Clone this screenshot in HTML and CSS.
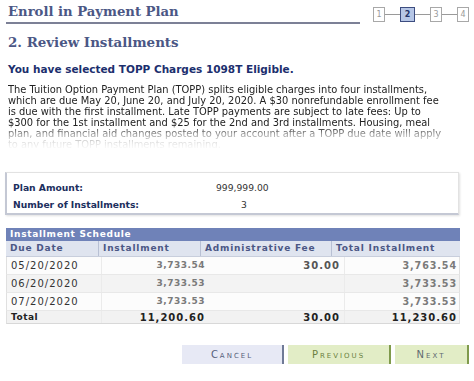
FILE: index.html
```html
<!DOCTYPE html>
<html lang="en">
  <head>
    <meta charset="UTF-8" />
    <meta name="viewport" content="width=device-width, initial-scale=1.0" />
    <title>Enroll in Payment Plan</title>
    <link rel="stylesheet" href="styles.css">
  </head>
  <body>
    <div class="page">
      <!-- Page title and step train -->
      <div class="title-bar">
        <h1 class="page-title">Enroll in Payment Plan</h1>
        <div class="steps">
          <span class="step">1</span>
          <span class="step-line"></span>
          <span class="step current">2</span>
          <span class="step-line"></span>
          <span class="step">3</span>
          <span class="step-line"></span>
          <span class="step">4</span>
        </div>
      </div>

      <h2 class="step-title">2. Review Installments</h2>

      <p class="selected">You have selected TOPP Charges 1098T Eligible.</p>

      <div class="intro">
        The Tuition Option Payment Plan (TOPP) splits eligible charges into four installments,<br>
        which are due May 20, June 20, and July 20, 2020. A $30 nonrefundable enrollment fee<br>
        is due with the first installment. Late TOPP payments are subject to late fees: Up to<br>
        $300 for the 1st installment and $25 for the 2nd and 3rd installments. Housing, meal<br>
        plan, and financial aid changes posted to your account after a TOPP due date will apply<br>
        to any future TOPP installments remaining.
      </div>

      <!-- Plan summary -->
      <div class="summary">
        <div class="summary-row">
          <span class="summary-label">Plan Amount:</span>
          <span class="summary-value">999,999.00</span>
        </div>
        <div class="summary-row">
          <span class="summary-label">Number of Installments:</span>
          <span class="summary-value count">3</span>
        </div>
      </div>

      <!-- Installment schedule grid -->
      <div class="schedule">
        <div class="grid-title">Installment Schedule</div>
        <div class="col-heads">
          <span>Due Date</span>
          <span>Installment</span>
          <span>Administrative Fee</span>
          <span>Total Installment</span>
        </div>
        <div class="grid-row">
          <span class="date">05/20/2020</span>
          <span class="num">3,733.54</span>
          <span class="num fee">30.00</span>
          <span class="num sum">3,763.54</span>
        </div>
        <div class="grid-row alt">
          <span class="date">06/20/2020</span>
          <span class="num">3,733.53</span>
          <span class="num fee"></span>
          <span class="num sum">3,733.53</span>
        </div>
        <div class="grid-row">
          <span class="date">07/20/2020</span>
          <span class="num">3,733.53</span>
          <span class="num fee"></span>
          <span class="num sum">3,733.53</span>
        </div>
        <div class="grid-row total-row">
          <span>Total</span>
          <span class="num">11,200.60</span>
          <span class="num fee">30.00</span>
          <span class="num sum">11,230.60</span>
        </div>
      </div>

      <div class="actions">
        <button type="button" class="btn cancel">Cancel</button>
        <button type="button" class="btn go prev">Previous</button>
        <button type="button" class="btn go next">Next</button>
      </div>
    </div>
  </body>
</html>
```

FILE: styles.css
```css
body {
  margin: 0;
  background: #ffffff;
  font-family: "DejaVu Sans", Verdana, sans-serif;
  color: #333333;
}
.page {
  width: 474px;
  height: 381px;
  overflow: hidden;
}
.title-bar {
  display: flex;
  align-items: flex-start;
  justify-content: space-between;
  padding: 0 5px 0 6px;
}
.page-title {
  margin: 3px 0 0;
  width: 352px;
  padding: 0 0 2px 2px;
  border-bottom: 2px solid #7c8096;
  font-family: "DejaVu Serif", Georgia, serif;
  font-size: 13.2px;
  font-weight: bold;
  color: #4b5785;
  line-height: 17px;
}
.steps {
  display: flex;
  align-items: center;
  margin-top: 7px;
}
.step {
  width: 10px;
  height: 13px;
  border: 1px solid #a8a8a8;
  background: #ffffff;
  color: #9a9a9a;
  font-size: 8px;
  line-height: 13px;
  text-align: center;
}
.step.current {
  width: 13px;
  border-color: #3d4d80;
  background: #b6c6e6;
  color: #24346a;
  font-weight: bold;
}
.step-line {
  width: 15px;
  height: 1px;
  background: #9a9a9a;
}
.step-title {
  margin: 9px 0 0 8px;
  font-family: "DejaVu Serif", Georgia, serif;
  font-size: 13.4px;
  font-weight: bold;
  color: #4b5785;
  line-height: 19px;
}
.selected {
  margin: 10px 0 0 8px;
  font-size: 10.5px;
  font-weight: bold;
  color: #1c2f6e;
  line-height: 14px;
}
.intro {
  margin: 8px 0 0 8px;
  width: 460px;
  height: 64px;
  overflow: hidden;
  white-space: nowrap;
  font-size: 9.9px;
  line-height: 11px;
  color: #222222;
  -webkit-mask-image: linear-gradient(to bottom, #000 43px, rgba(0, 0, 0, 0.45) 50px, rgba(0, 0, 0, 0.12) 59px, transparent 66px);
  mask-image: linear-gradient(to bottom, #000 43px, rgba(0, 0, 0, 0.45) 50px, rgba(0, 0, 0, 0.12) 59px, transparent 66px);
}
.summary {
  margin: 24px 0 0 5px;
  width: 445px;
  padding: 6px 0 0 6px;
  border: 1px solid #e2e2e2;
  border-left: 2px solid #c4c8d4;
  border-bottom: 2px solid #c4c8d4;
  box-shadow: 1px 1px 2px rgba(0, 0, 0, 0.12);
}
.summary-row {
  display: flex;
  height: 17px;
  align-items: center;
  font-size: 9.2px;
}
.summary-label {
  width: 203px;
  font-weight: bold;
  color: #1c2f5e;
}
.summary-value {
  color: #333333;
}
.summary-value.count {
  padding-left: 25px;
}

/* schedule grid: header and body columns do not line up exactly */
.schedule {
  margin: 13px 0 0 6px;
  width: 454px;
  font-size: 9px;
  letter-spacing: 0.5px;
  line-height: 11px;
  white-space: nowrap;
}
.schedule span {
  box-sizing: border-box;
  padding: 0 4px;
  overflow: hidden;
}
.grid-title {
  height: 13px;
  line-height: 13px;
  padding-left: 4px;
  background: #6f82b8;
  color: #ffffff;
  font-weight: bold;
  letter-spacing: 0.7px;
}
.col-heads {
  display: grid;
  grid-template-columns: 92px 102px 131px 129px;
  height: 16px;
  background: #dfe4ef;
  border-bottom: 1px solid #c8cedc;
  box-sizing: border-box;
}
.col-heads span {
  display: flex;
  align-items: center;
  color: #4b5785;
  font-weight: bold;
  letter-spacing: 0.8px;
  border-left: 1px solid #b8c0d4;
}
.col-heads span:first-child {
  border-left: none;
}
.grid-row {
  display: grid;
  grid-template-columns: 94px 108px 135px 117px;
  height: 18px;
  box-sizing: border-box;
  background: #fcfcfc;
  border-left: 1px solid #e0e0e0;
  border-right: 1px solid #e0e0e0;
  border-bottom: 1px solid #e8e8e8;
}
.grid-row span {
  display: flex;
  align-items: center;
  color: #333333;
  border-left: 1px solid #ebebeb;
}
.grid-row span:first-child {
  border-left: none;
}
.grid-row .date {
  font-size: 10px;
  letter-spacing: 1px;
}
.grid-row .num {
  justify-content: flex-end;
  color: #7a7a7a;
  font-weight: bold;
}
.grid-row .fee {
  border-left: none;
  color: #555555;
  font-size: 10px;
  letter-spacing: 1px;
}
.grid-row .sum {
  font-size: 9.6px;
  letter-spacing: 0.9px;
}
.grid-row.alt {
  background: #f3f3f3;
}
.grid-row.total-row {
  height: 13px;
  background: #f2f2f2;
  border-bottom-color: #d8d8d8;
}
.total-row span {
  font-weight: bold;
  color: #222222;
}
.total-row .num {
  color: #222222;
  font-size: 10px;
  letter-spacing: 1px;
}
.actions {
  display: flex;
  justify-content: flex-end;
  gap: 4px;
  margin-top: 21px;
  padding-right: 5px;
}
.btn {
  height: 19px;
  padding: 0;
  border: none;
  border-right: 2px solid #6f7a96;
  font-family: "DejaVu Sans", Verdana, sans-serif;
  font-size: 10px;
  font-variant: small-caps;
  letter-spacing: 2px;
  cursor: pointer;
}
.cancel {
  width: 102px;
  background: #e7e9f5;
  color: #56607a;
}
.go {
  background: #e2edc6;
  border-right-color: #7f9a4c;
}
.prev {
  width: 103px;
  color: #6b8040;
}
.next {
  width: 74px;
  color: #5f6a70;
}
```
